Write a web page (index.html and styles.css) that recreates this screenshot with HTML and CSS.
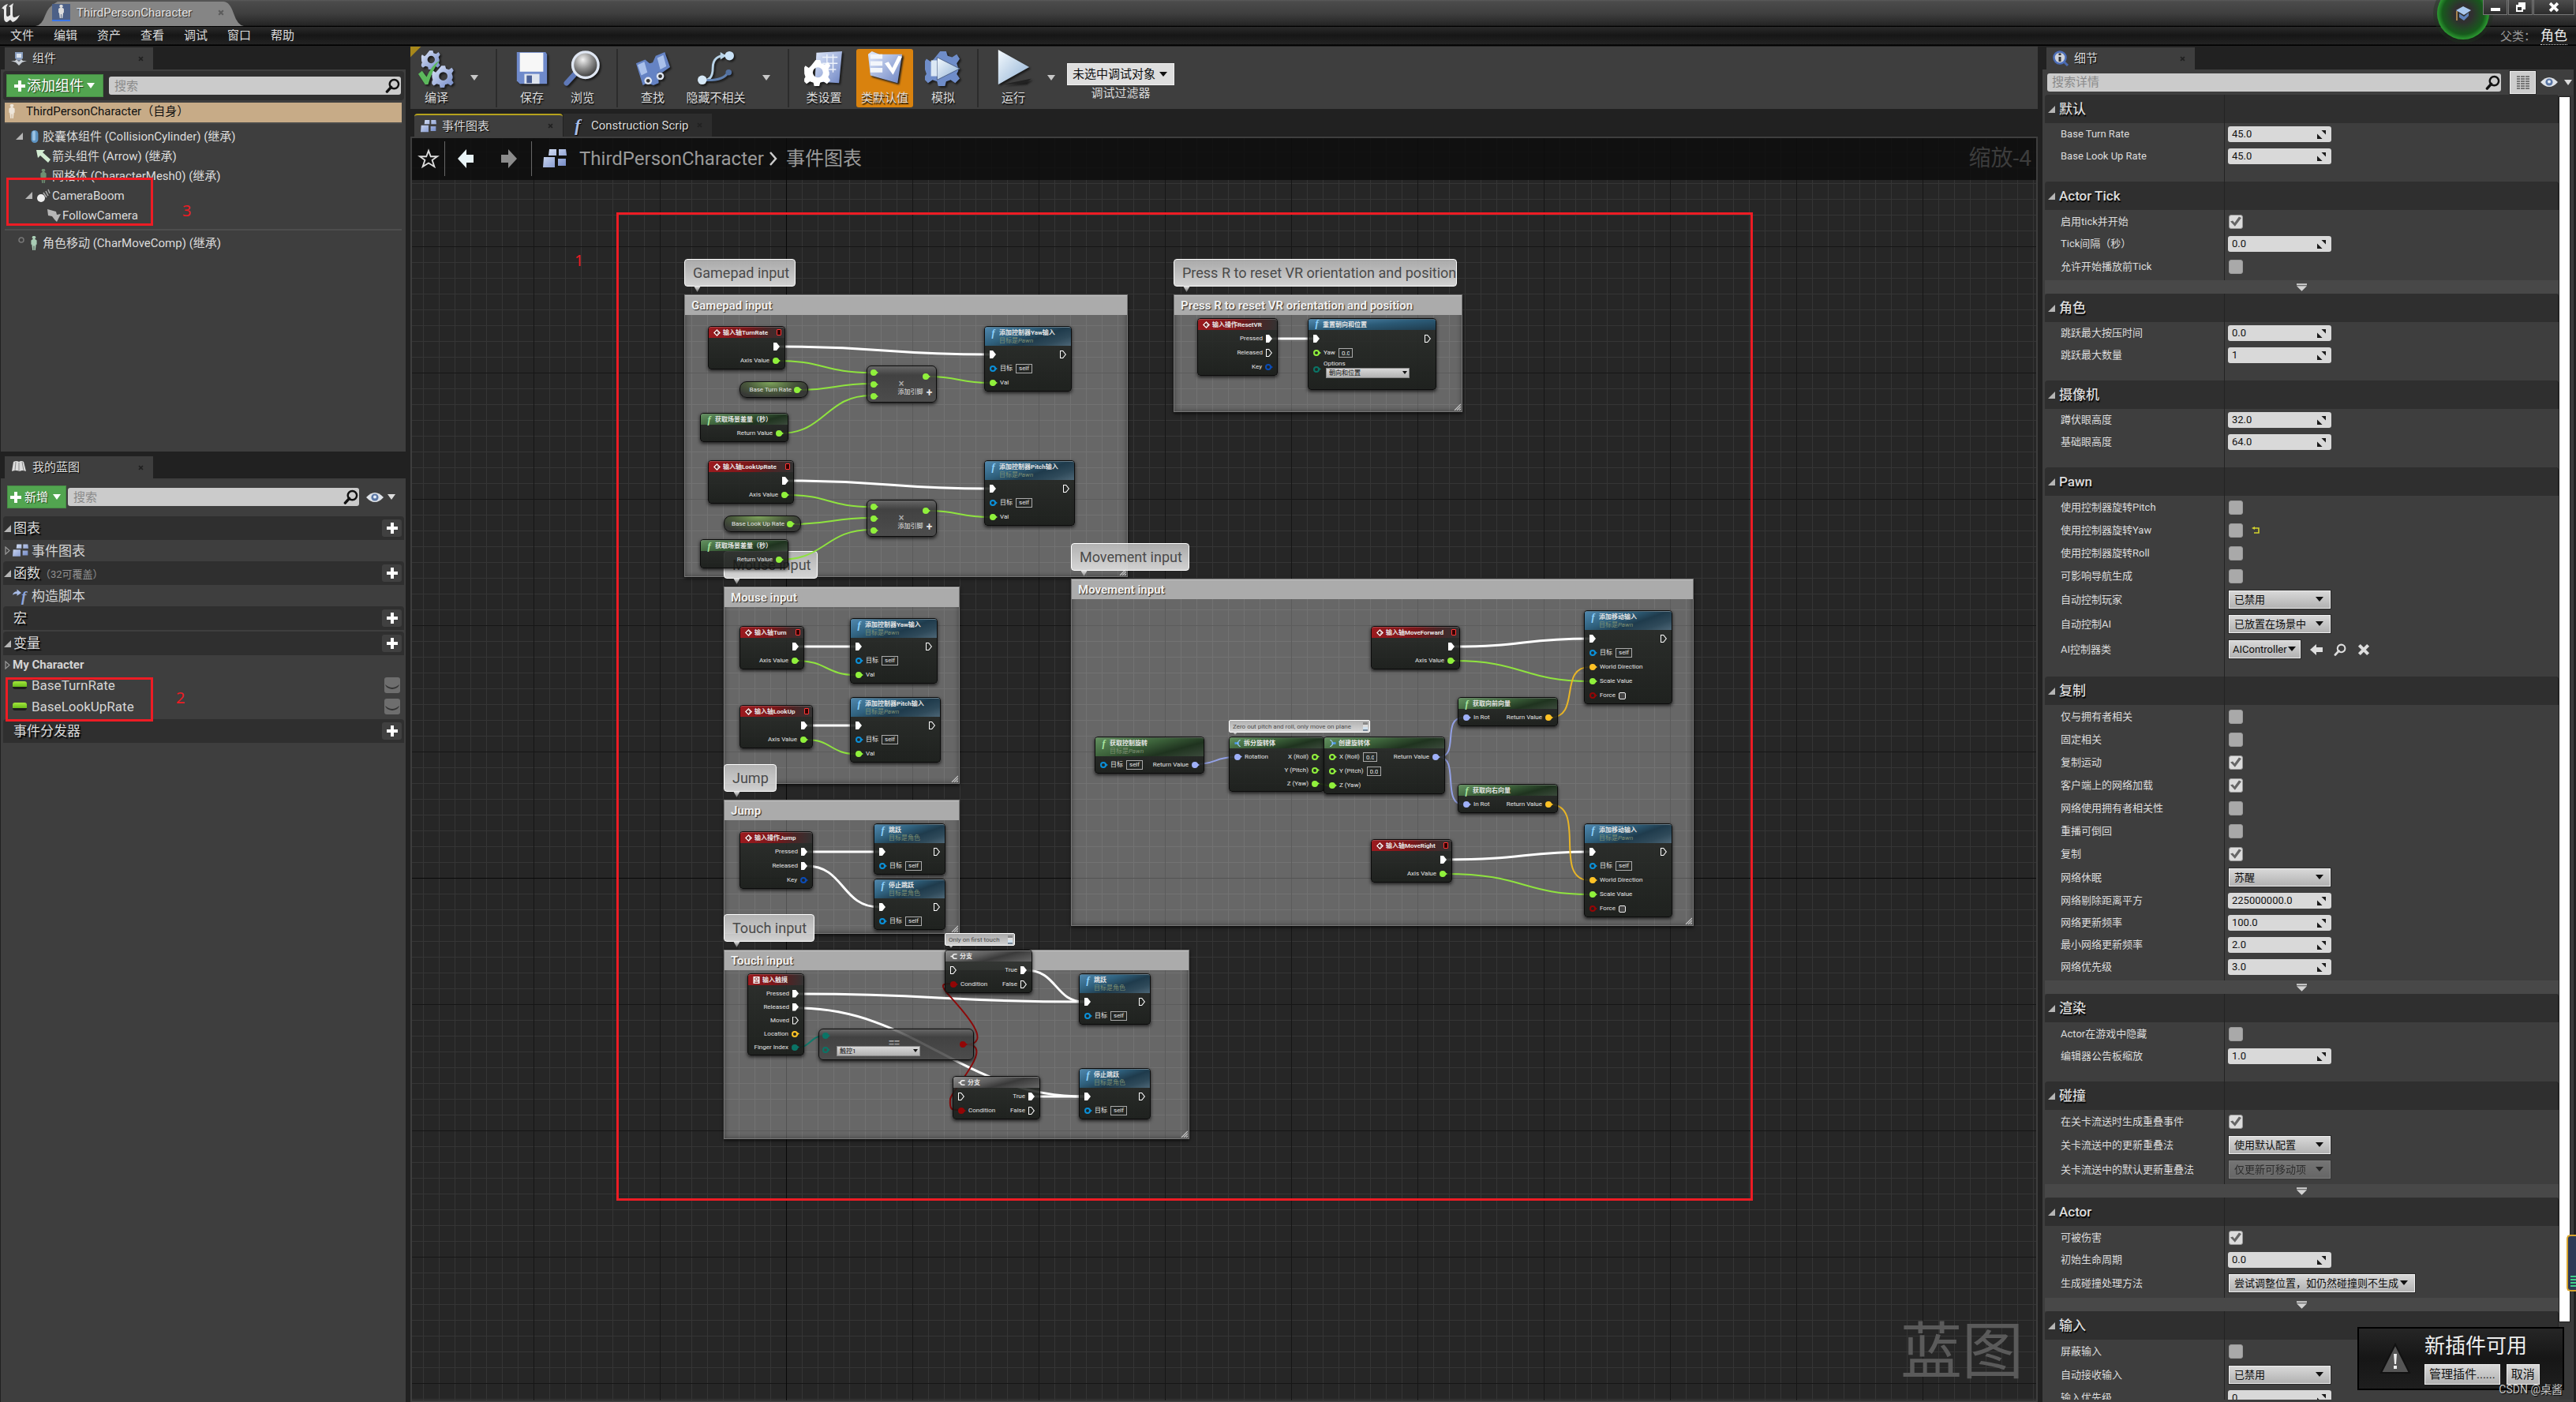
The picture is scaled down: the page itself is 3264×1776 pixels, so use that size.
FILE: index.html
```html
<!DOCTYPE html>
<html lang="zh-CN">
<head>
<meta charset="utf-8">
<title>ThirdPersonCharacter</title>
<link rel="stylesheet" href="styles.css">
</head>
<body>
<svg class="defs" aria-hidden="true">
  <defs>
    <linearGradient id="steel" x1="0" y1="0" x2="1" y2="1"><stop offset="0" stop-color="#dfe8fa"/><stop offset="1" stop-color="#6f86c4"/></linearGradient>
    <linearGradient id="sky" x1="0" y1="0" x2="1" y2="1"><stop offset="0" stop-color="#f4fafe"/><stop offset="1" stop-color="#8fb0d4"/></linearGradient>
    <radialGradient id="lens" cx=".4" cy=".3" r=".8"><stop offset="0" stop-color="#f2f2f2"/><stop offset=".45" stop-color="#8d8d8d"/><stop offset="1" stop-color="#222"/></radialGradient>
    <symbol id="search" viewBox="0 0 20 20"><circle cx="12" cy="8" r="6" fill="none" stroke="currentColor" stroke-width="2.6"/><path d="M8 12 2.500 18" stroke="currentColor" stroke-width="3.600" stroke-linecap="round"/></symbol>
    <symbol id="plus" viewBox="0 0 14 14"><path d="M5 0h4v5h5v4H9v5H5V9H0V5h5z" fill="currentColor"/></symbol>
    <symbol id="cross" viewBox="0 0 10 10"><path d="M1.500 1.500 8.500 8.500M8.500 1.500 1.500 8.500" stroke="currentColor" stroke-width="2.600"/></symbol>
    <symbol id="down" viewBox="0 0 10 7"><path d="M0 0h10L5 7z" fill="currentColor"/></symbol>
    <symbol id="open" viewBox="0 0 9 9"><path d="M9 0v9H0z" fill="#b5b5b5"/></symbol>
    <symbol id="closed" viewBox="0 0 7 11"><path d="M1 1v9l5-4.500z" fill="none" stroke="#999" stroke-width="1.200"/></symbol>
    <symbol id="eye" viewBox="0 0 22 14"><path d="M0 7Q11-5 22 7 11 19 0 7z" fill="#dfe3e8"/><circle cx="11" cy="7" r="4.600" fill="#5c78a6"/><circle cx="11" cy="6.500" r="2" fill="#e4ecf7"/></symbol>
    <symbol id="graph" viewBox="0 0 30 24"><path d="M8 0h9v8H7zM20 0h9l1 8H20zM19 12h10v9H19zM1 10h14v13H0z" fill="url(#steel)"/></symbol>
    <symbol id="spin" viewBox="0 0 10 10"><path d="M5 0h5v5zM0 4v6h6z" fill="#1a1a1a"/></symbol>
    <symbol id="more" viewBox="0 0 14 10"><path d="M0 0h14v2H0zM0 3h14l-7 7z" fill="#d2d2d2"/></symbol>
    <symbol id="gear" viewBox="-12 -12 24 24"><path fill-rule="evenodd" d="M-2-11h4l1 3 3 1 3-2 2 3-2 3 1 3v2l-1 2 2 3-3 3-3-2-3 1-1 4h-4l-1-4-3-1-3 2-3-3 2-3-1-3v-2l-1-2 2-3 3 2 2-2zM0-4.500A4.500 4.500 0 1 0 0 4.500 4.500 4.500 0 1 0 0-4.500z"/></symbol>
    <symbol id="man" viewBox="0 0 10 20"><path d="M5 0a2 2 0 0 1 1 4l3 2v6H8l-1 8H5.500v-6h-1v6H3l-1-8H1V6l3-2a2 2 0 0 1 1-4z" fill="currentColor"/></symbol>
    <symbol id="grip" viewBox="0 0 9 9"><path d="M1 9 9 1M4 9 9 4M7 9 9 7" stroke="#c8c8c8" stroke-width="1.200"/></symbol>
    <symbol id="event" viewBox="0 0 10 10"><path d="M5 1 9 5 5 9 1 5z" fill="#5a0f10" stroke="#fff" stroke-width="1.400"/><path d="M5 3 7 5 5 7" fill="none" stroke="#fff"/></symbol>
    <symbol id="branch" viewBox="0 0 9 10"><path d="M9 2H6Q3 2 3 5T6 8H9M0 5h3" fill="none" stroke="#eee" stroke-width="1.800"/></symbol>
    <symbol id="split" viewBox="0 0 9 10"><path d="M0 5h6" stroke="#4c9bea" stroke-width="3"/><path d="M8 0Q4 3 4 5T8 10" fill="none" stroke="#9cc8ef" stroke-width="1.300"/></symbol>
    <symbol id="merge" viewBox="0 0 9 10"><path d="M3 5h6" stroke="#4c9bea" stroke-width="3"/><path d="M1 0Q5 3 5 5T1 10" fill="none" stroke="#9cc8ef" stroke-width="1.300"/></symbol>
    <symbol id="touch" viewBox="0 0 9 10"><path d="M0 0h9v10H0z" fill="#f2f2f2"/><circle cx="4.500" cy="3.500" r="2" fill="none" stroke="#822"/><path d="M2 8h5" stroke="#822" stroke-width="1.400"/></symbol>
  </defs>
</svg>
<div class="app">
  <header class="titlebar">
    <svg class="logo" viewBox="0 0 28 24"><path d="M1 7Q4 2 9 1L7 5V15q0 2 2 2l3-2V5l-2-1 6-4-1 4V14q0 4 2 4 2 0 7-3-4 8-9 9l-3-3-4 3Q4 24 4 18V8Q2 6 1 7z" fill="#e8e8e8"/></svg>
    <div class="window-tab">
      <svg class="window-tab-shape" viewBox="0 0 264 31" preserveAspectRatio="none"><path d="M0 31Q8 30 12 18T28 0H238Q246 0 251 15T264 31z" fill="#858585"/></svg>
      <span class="thumb"><svg><use href="#man"/></svg></span>
      <span>ThirdPersonCharacter</span>
      <svg class="x"><use href="#cross"/></svg>
    </div>
    <div class="tutorial"><svg viewBox="0 0 20 20"><path d="M10 1 20 6 11 12 1 6z" fill="#a9c8ee"/><path d="M5 10v5l6 4 6-6V9l-6 5z" fill="#5f83bb"/><path d="M2 7v12" stroke="#a5814e" stroke-width="2"/></svg></div>
    <div class="window-buttons">
      <button aria-label="最小化"><svg viewBox="0 0 14 14"><path d="M1 8h12v4H1z" fill="#fff"/></svg></button>
      <button aria-label="还原"><svg viewBox="0 0 14 14"><path d="M4 1h9v9h-3v3H1V4h3zM3 7v4h5V7z" fill="#fff" fill-rule="evenodd"/></svg></button>
      <button class="close" aria-label="关闭"><svg viewBox="0 0 10 10"><use href="#cross"/></svg></button>
    </div>
  </header>
  <nav class="menubar">
    <a href="#">文件</a><a href="#">编辑</a><a href="#">资产</a><a href="#">查看</a><a href="#">调试</a><a href="#">窗口</a><a href="#">帮助</a>
    <span class="parent">父类：<a href="#">角色</a></span>
  </nav>

  <main class="workspace">
    <aside class="left">
      <section class="dock components">
        <div class="tabs"><div class="tab"><svg viewBox="0 0 20 20"><path d="M5 2h10v8l-5 3-5-3z" fill="#8a9fc0"/><path d="M7 4h6v5H7z" fill="#dbe3ee"/><path d="M0 13h5l2-2 3 3 3-3 2 2h5l-6 2-4 4-4-4z" fill="#c9cfd6"/></svg><span>组件</span><svg class="x"><use href="#cross"/></svg></div></div>
        <div class="panel">
          <div class="bar">
            <button class="green big"><svg><use href="#plus"/></svg>添加组件<svg class="dn"><use href="#down"/></svg></button>
            <label class="search"><input type="search" placeholder="搜索" aria-label="搜索组件"><svg><use href="#search"/></svg></label>
          </div>
          <ul class="tree">
            <li class="selected"><svg class="ico"><use href="#man"/></svg>ThirdPersonCharacter（自身）</li>
            <li class="l1"><svg class="tri"><use href="#open"/></svg><svg class="ico" viewBox="0 0 16 20"><rect x="4" y="1" width="10" height="18" rx="5" fill="#5d93c2"/><rect x="6" y="2" width="4" height="14" rx="2" fill="#9cc4e4"/></svg>胶囊体组件 (CollisionCylinder) (继承)</li>
            <li class="l2"><i class="tri"></i><svg class="ico" viewBox="0 0 18 18"><path d="M0 1h11L8 4l10 9-3 4-10-9-3 3z" fill="#d3ecd3"/></svg>箭头组件 (Arrow) (继承)</li>
            <li class="l2"><i class="tri"></i><svg class="ico mesh"><use href="#man"/></svg>网格体 (CharacterMesh0) (继承)</li>
            <li class="l2"><svg class="tri"><use href="#open"/></svg><svg class="ico" viewBox="0 0 18 18"><circle cx="6" cy="12" r="5" fill="#eee"/><path d="m9 5 4 6M12 3l3 6M15 1l2 5" stroke="#aaa" stroke-width="1.600"/></svg>CameraBoom</li>
            <li class="l3"><i class="tri"></i><svg class="ico" viewBox="0 0 18 18"><path d="m1 1 11 3 1 4 5-1-2 4-3 6-3-3-3-4-5-1z" fill="#b7b7b7"/></svg>FollowCamera</li>
            <li class="l1 last"><svg class="tri" viewBox="0 0 9 9"><circle cx="7" cy="1" r="3" fill="none" stroke="#777" stroke-width="1.500"/></svg><svg class="ico move"><use href="#man"/></svg>角色移动 (CharMoveComp) (继承)</li>
          </ul>
        </div>
      </section>
      <section class="dock blueprint">
        <div class="tabs"><div class="tab"><svg viewBox="0 0 20 20"><path d="M3 3q4-2 7 0 3-2 6 0l3 12q-5-2-8 0-5-2-10 0z" fill="#dcdcdc"/><path d="M10 4v11M6 3 5 14M14 3l2 11" stroke="#8a8a8a"/></svg><span>我的蓝图</span><svg class="x"><use href="#cross"/></svg></div></div>
        <div class="panel">
          <div class="bar plain">
            <button class="green"><svg><use href="#plus"/></svg>新增<svg class="dn"><use href="#down"/></svg></button>
            <label class="search"><input type="search" placeholder="搜索" aria-label="搜索蓝图"><svg><use href="#search"/></svg></label>
            <button class="view" aria-label="视图选项"><svg class="eye"><use href="#eye"/></svg><svg class="dn"><use href="#down"/></svg></button>
          </div>
          <h3 class="group"><svg class="tri"><use href="#open"/></svg>图表<button aria-label="添加图表"><svg><use href="#plus"/></svg></button></h3>
          <div class="item"><svg class="tri"><use href="#closed"/></svg><svg class="ico"><use href="#graph"/></svg>事件图表</div>
          <h3 class="group"><svg class="tri"><use href="#open"/></svg>函数<small>（32可覆盖）</small><button aria-label="添加函数"><svg><use href="#plus"/></svg></button></h3>
          <div class="item"><i class="tri"></i><span class="ico fn"><svg viewBox="0 0 12 10"><path d="M0 8Q1 3 6 3V0l6 5-6 4V6Q2 6 0 8z" fill="#a7bbe6"/></svg><i>f</i></span>构造脚本</div>
          <h3 class="group gap"><i class="tri"></i>宏<button aria-label="添加宏"><svg><use href="#plus"/></svg></button></h3>
          <h3 class="group"><svg class="tri"><use href="#open"/></svg>变量<button aria-label="添加变量"><svg><use href="#plus"/></svg></button></h3>
          <div class="item cat"><svg class="tri"><use href="#closed"/></svg>My Character</div>
          <div class="item"><i class="tri"></i><i class="ico var"></i>BaseTurnRate<button class="lid" aria-label="公开"><svg viewBox="0 0 20 20"><path d="M1 9q9 8 18 0-1 5-9 6Q2 14 1 9z" fill="#333"/></svg></button></div>
          <div class="item"><i class="tri"></i><i class="ico var"></i>BaseLookUpRate<button class="lid" aria-label="公开"><svg viewBox="0 0 20 20"><path d="M1 9q9 8 18 0-1 5-9 6Q2 14 1 9z" fill="#333"/></svg></button></div>
          <h3 class="group after"><i class="tri"></i>事件分发器<button aria-label="添加事件分发器"><svg><use href="#plus"/></svg></button></h3>
        </div>
      </section>
    </aside>

    <section class="center">
      <div class="toolbar">
        <div class="tools">
          <button><svg viewBox="0 0 48 48"><g fill="url(#steel)"><use href="#gear" x="4" y="0" width="26" height="26"/><use href="#gear" x="18" y="20" width="30" height="30"/></g><path d="m0 32 5-4 6 8Q18 20 28 14 18 28 13 46H9z" fill="#5cb85c"/></svg>编译</button>
          <button class="drop" aria-label="编译选项"><svg><use href="#down"/></svg></button>
        </div>
        <div class="tools">
          <button><svg viewBox="0 0 48 48"><path d="M4 3h38l2 3v39H8l-4-4z" fill="#6f8acb"/><path d="M8 4h31v25H8z" fill="#f7f7f7"/><path d="M14 32h20v13H14z" fill="#dfe5ee"/><path d="M17 34h7v10h-7z" fill="#4a5f94"/></svg>保存</button>
          <button><svg viewBox="0 0 48 48"><path d="M14 32 3 44" stroke="#5f79b8" stroke-width="7" stroke-linecap="round"/><circle cx="28" cy="20" r="17" fill="url(#lens)" stroke="#dfe6f2" stroke-width="3.500"/></svg>浏览</button>
        </div>
        <div class="tools">
          <button><svg viewBox="0 0 48 48"><path d="m2 18 12-5 6 5 4-1 4-9 12-5 7 20-10 7-6 0 1 14-7 3-8-3-6 3-5-16z" fill="#6583c4"/><path d="m4 20 9-4 4 14-8 4zM30 11l8-4 4 15-8 4z" fill="#a9c0ea"/><circle cx="18" cy="41" r="5" fill="#dfe6f2"/><circle cx="34" cy="35" r="5" fill="#dfe6f2"/><circle cx="18" cy="41" r="2.500" fill="#333"/><circle cx="34" cy="35" r="2.500" fill="#333"/></svg>查找</button>
          <button class="wide"><svg viewBox="0 0 48 48"><path d="M6 40Q20 42 20 24T40 8" fill="none" stroke="#b8d3e8" stroke-width="3"/><path d="M6 40Q34 42 40 30" fill="none" stroke="#5f7fae" stroke-width="3"/><path d="m30 3 8 5-8 5z" fill="#b8d3e8"/><circle cx="42" cy="8" r="6" fill="#c9e2f7"/><circle cx="41" cy="30" r="4" fill="#52709f"/><circle cx="6" cy="40" r="6" fill="#d6e8f6"/></svg>隐藏不相关</button>
          <button class="drop" aria-label="隐藏选项"><svg><use href="#down"/></svg></button>
        </div>
        <div class="tools">
          <button><svg viewBox="0 0 48 48"><path d="M14 4 48 2 44 44 12 42z" fill="url(#steel)"/><path d="M22 10h20M22 18h20M22 26h18M28 6v24M36 6v24" stroke="#eef3fb" stroke-width="1.500"/><g fill="#fff"><use href="#gear" x="-2" y="12" width="36" height="36"/></g></svg>类设置</button>
          <button class="on"><svg viewBox="0 0 48 48"><path d="m2 6 5-4 10 4 30 0-6 38L5 34z" fill="url(#steel)"/><path d="M5 9h16M5 18h16M5 27h16" stroke="#f3f6fb" stroke-width="6"/><path d="m24 18 5-2 5 8L42 8l5 1-12 24z" fill="#fff"/></svg>类默认值</button>
          <button><svg viewBox="0 0 48 48"><g fill="#6f8dc9"><use href="#gear" x="0" y="0" width="48" height="48"/></g><path d="M16 10 46 25 16 40z" fill="url(#sky)" stroke="#4a5f86"/><path d="M8 14h8v21H8z" fill="#dbe8f4"/></svg>模拟</button>
        </div>
        <div class="tools">
          <button><svg viewBox="0 0 48 48"><path d="M10 46 48 38 40 44z" fill="#222"/><path d="M4 0 45 23 4 46z" fill="url(#sky)"/></svg>运行</button>
          <button class="drop" aria-label="运行选项"><svg><use href="#down"/></svg></button>
          <label class="debug"><span class="combo"><select><option>未选中调试对象</option></select></span>调试过滤器</label>
        </div>
      </div>
      <div class="tabs graph-tabs">
        <div class="tab active"><svg><use href="#graph"/></svg><span>事件图表</span><svg class="x"><use href="#cross"/></svg></div>
        <div class="tab"><i class="f">f</i><span>Construction Scrip</span><svg class="x"><use href="#cross"/></svg></div>
      </div>
      <div class="graph">
        <div class="crumbs">
          <button aria-label="收藏"><svg class="star" viewBox="0 0 26 26"><path d="m13 2 3 8 9 0-7 5 3 9-8-5-8 5 3-9-7-5 9 0z" fill="none" stroke="#ddd" stroke-width="2"/></svg></button>
          <button aria-label="后退"><svg viewBox="0 0 24 28"><path d="M13 2v7h9v10h-9v7L2 14z" fill="#e8f3f6"/></svg></button>
          <button aria-label="前进"><svg viewBox="0 0 24 28"><path d="M11 2v7H2v10h9v7l11-12z" fill="#8b8b8b"/></svg></button>
          <svg class="gi"><use href="#graph"/></svg>
          <a href="#">ThirdPersonCharacter</a><svg class="chev" viewBox="0 0 12 20"><path d="m2 2 7 8-7 8" fill="none" stroke="#ccc" stroke-width="2.500"/></svg><span>事件图表</span>
          <span class="zoom">缩放-4</span>
        </div>
        <div class="watermark">蓝图</div>
        <div class="world">
          <section class="comment" id="c-pad"><h4>Gamepad input</h4><svg><use href="#grip"/></svg></section>
          <section class="comment" id="c-vr"><h4>Press R to reset VR orientation and position</h4><svg><use href="#grip"/></svg></section>
          <section class="comment" id="c-mouse"><h4>Mouse input</h4><svg><use href="#grip"/></svg></section>
          <section class="comment" id="c-jump"><h4>Jump</h4><svg><use href="#grip"/></svg></section>
          <section class="comment" id="c-touch"><h4>Touch input</h4><svg><use href="#grip"/></svg></section>
          <section class="comment" id="c-move"><h4>Movement input</h4><svg><use href="#grip"/></svg></section>
          <p class="bubble" id="b-pad">Gamepad input</p>
          <p class="bubble" id="b-vr">Press R to reset VR orientation and position</p>
          <p class="bubble" id="b-mouse">Mouse input</p>
          <p class="bubble" id="b-jump">Jump</p>
          <p class="bubble" id="b-touch">Touch input</p>
          <p class="bubble" id="b-move">Movement input</p>
          <p class="bubble note" id="b-first">Only on first touch</p>
          <p class="bubble note" id="b-zero">Zero out pitch and roll, only move on plane</p>

          <svg class="wires" width="2200" height="1500">
            <g class="w-exec">
              <path d="M986 439C1120 439 1120 449 1254 449"/><path d="M998 609C1126 609 1126 619 1254 619"/>
              <path d="M1610 429H1664"/><path d="M1010 819H1084"/><path d="M1022 919H1084"/>
              <path d="M1022 1079H1114"/><path d="M1022 1097C1070 1097 1066 1149 1114 1149"/>
              <path d="M1010 1259C1190 1259 1190 1269 1374 1269"/><path d="M1010 1277C1160 1277 1220 1389 1374 1389"/>
              <path d="M1300 1229C1340 1229 1336 1269 1374 1269"/><path d="M1310 1389H1374"/>
              <path d="M1842 819C1930 819 1930 809 2014 809"/><path d="M1832 1089C1930 1089 1930 1079 2014 1079"/>
            </g>
            <g class="w-float">
              <path d="M984 457C1044 457 1044 472 1104 472"/><path d="M1012 494C1058 494 1058 486 1104 486"/>
              <path d="M988 549C1046 549 1046 501 1104 501"/><path d="M1177 477C1215 477 1215 485 1254 485"/>
              <path d="M996 627C1050 627 1050 642 1104 642"/><path d="M1004 664C1054 664 1054 656 1104 656"/>
              <path d="M988 709C1046 709 1046 671 1104 671"/><path d="M1177 647C1215 647 1215 655 1254 655"/>
              <path d="M1010 837C1047 837 1047 855 1084 855"/><path d="M1022 937C1053 937 1053 955 1084 955"/>
              <path d="M1669 992 1686 996"/>
              <path d="M1842 837C1930 837 1930 863 2014 863"/><path d="M1832 1107C1930 1107 1930 1133 2014 1133"/>
            </g>
            <g class="w-rot"><path d="M1517 968C1540 968 1540 959 1564 959"/><path d="M1823 959C1850 959 1826 909 1854 909"/><path d="M1823 959C1850 959 1826 1019 1854 1019"/></g>
            <g class="w-vec"><path d="M1964 909C2004 909 1974 845 2014 845"/><path d="M1964 1019C2012 1019 1966 1115 2014 1115"/></g>
            <path class="w-enum" d="M1010 1327C1027 1327 1027 1312 1044 1312"/>
            <g class="w-bool"><path d="M1224 1323C1262 1323 1215 1275 1200 1258 1190 1246 1196 1246 1206 1246"/><path d="M1224 1323C1262 1323 1208 1378 1204 1392 1203 1406 1206 1406 1214 1406"/></g>
          </svg>

          <article class="node red" id="n-turnrate"><h5><svg><use href="#event"/></svg>输入轴TurnRate<b></b></h5><div><span></span><span><i class="ex"></i></span></div><div><span></span><span>Axis Value<i class="pin float on"></i></span></div></article>
          <article class="node pill" id="n-baseturn"><span>Base Turn Rate<i class="pin float on"></i></span></article>
          <article class="node grn" id="n-delta1"><h5><i class="f">f</i>获取场景差量（秒）</h5><div><span></span><span>Return Value<i class="pin float on"></i></span></div></article>
          <article class="node math" id="n-mul1"><div class="pins"><i class="pin float on"></i><i class="pin float on"></i><i class="pin float on"></i></div><p><em>×</em>添加引脚 <b>✚</b></p><i class="pin float on"></i></article>
          <article class="node blu" id="n-yaw1"><h5><i class="f">f</i><span>添加控制器Yaw输入<small>目标是<em>Pawn</em></small></span></h5><div><span><i class="ex"></i></span><span><i class="ex off"></i></span></div><div><span><i class="pin obj"></i>目标<u>self</u></span></div><div><span><i class="pin float on"></i>Val</span></div></article>
          <article class="node red" id="n-lookrate"><h5><svg><use href="#event"/></svg>输入轴LookUpRate<b></b></h5><div><span></span><span><i class="ex"></i></span></div><div><span></span><span>Axis Value<i class="pin float on"></i></span></div></article>
          <article class="node pill" id="n-baselook"><span>Base Look Up Rate<i class="pin float on"></i></span></article>
          <article class="node grn" id="n-delta2"><h5><i class="f">f</i>获取场景差量（秒）</h5><div><span></span><span>Return Value<i class="pin float on"></i></span></div></article>
          <article class="node math" id="n-mul2"><div class="pins"><i class="pin float on"></i><i class="pin float on"></i><i class="pin float on"></i></div><p><em>×</em>添加引脚 <b>✚</b></p><i class="pin float on"></i></article>
          <article class="node blu" id="n-pitch1"><h5><i class="f">f</i><span>添加控制器Pitch输入<small>目标是<em>Pawn</em></small></span></h5><div><span><i class="ex"></i></span><span><i class="ex off"></i></span></div><div><span><i class="pin obj"></i>目标<u>self</u></span></div><div><span><i class="pin float on"></i>Val</span></div></article>

          <article class="node red" id="n-resetvr"><h5><svg><use href="#event"/></svg>输入操作ResetVR</h5><div><span></span><span>Pressed<i class="ex"></i></span></div><div><span></span><span>Released<i class="ex off"></i></span></div><div><span></span><span>Key<i class="pin key"></i></span></div></article>
          <article class="node blu flat" id="n-orient"><h5><i class="f">f</i>重置朝向和位置</h5><div><span><i class="ex"></i></span><span><i class="ex off"></i></span></div><div><label><i class="pin float"></i>Yaw<input value="0.0"></label></div><div class="tall"><span><i class="pin enum"></i><label class="stack">Options<span class="combo"><select><option>朝向和位置</option></select></span></label></span></div></article>

          <article class="node red" id="n-turn"><h5><svg><use href="#event"/></svg>输入轴Turn<b></b></h5><div><span></span><span><i class="ex"></i></span></div><div><span></span><span>Axis Value<i class="pin float on"></i></span></div></article>
          <article class="node blu" id="n-yaw2"><h5><i class="f">f</i><span>添加控制器Yaw输入<small>目标是<em>Pawn</em></small></span></h5><div><span><i class="ex"></i></span><span><i class="ex off"></i></span></div><div><span><i class="pin obj"></i>目标<u>self</u></span></div><div><span><i class="pin float on"></i>Val</span></div></article>
          <article class="node red" id="n-look"><h5><svg><use href="#event"/></svg>输入轴LookUp<b></b></h5><div><span></span><span><i class="ex"></i></span></div><div><span></span><span>Axis Value<i class="pin float on"></i></span></div></article>
          <article class="node blu" id="n-pitch2"><h5><i class="f">f</i><span>添加控制器Pitch输入<small>目标是<em>Pawn</em></small></span></h5><div><span><i class="ex"></i></span><span><i class="ex off"></i></span></div><div><span><i class="pin obj"></i>目标<u>self</u></span></div><div><span><i class="pin float on"></i>Val</span></div></article>

          <article class="node red" id="n-jump"><h5><svg><use href="#event"/></svg>输入操作Jump</h5><div><span></span><span>Pressed<i class="ex"></i></span></div><div><span></span><span>Released<i class="ex"></i></span></div><div><span></span><span>Key<i class="pin key"></i></span></div></article>
          <article class="node blu" id="n-dojump"><h5><i class="f">f</i><span>跳跃<small>目标是角色</small></span></h5><div><span><i class="ex"></i></span><span><i class="ex off"></i></span></div><div><span><i class="pin obj"></i>目标<u>self</u></span></div></article>
          <article class="node blu" id="n-stopjump"><h5><i class="f">f</i><span>停止跳跃<small>目标是角色</small></span></h5><div><span><i class="ex"></i></span><span><i class="ex off"></i></span></div><div><span><i class="pin obj"></i>目标<u>self</u></span></div></article>

          <article class="node red tight" id="n-touch"><h5><svg><use href="#touch"/></svg>输入触摸</h5><div><span></span><span>Pressed<i class="ex"></i></span></div><div><span></span><span>Released<i class="ex"></i></span></div><div><span></span><span>Moved<i class="ex off"></i></span></div><div><span></span><span>Location<i class="pin vec"></i></span></div><div><span></span><span>Finger Index<i class="pin enum on"></i></span></div></article>
          <article class="node math" id="n-equal"><div class="pins"><i class="pin enum on"></i><i class="pin enum"></i></div><p><em>==</em><label class="combo"><select aria-label="手指索引"><option>触控1</option></select></label></p><i class="pin bool on"></i></article>
          <article class="node gry" id="n-branch1"><h5><svg><use href="#branch"/></svg>分支</h5><div><span><i class="ex off"></i></span><span>True<i class="ex"></i></span></div><div><span><i class="pin bool on"></i>Condition</span><span>False<i class="ex off"></i></span></div></article>
          <article class="node gry" id="n-branch2"><h5><svg><use href="#branch"/></svg>分支</h5><div><span><i class="ex off"></i></span><span>True<i class="ex"></i></span></div><div><span><i class="pin bool on"></i>Condition</span><span>False<i class="ex off"></i></span></div></article>
          <article class="node blu" id="n-tjump"><h5><i class="f">f</i><span>跳跃<small>目标是角色</small></span></h5><div><span><i class="ex"></i></span><span><i class="ex off"></i></span></div><div><span><i class="pin obj"></i>目标<u>self</u></span></div></article>
          <article class="node blu" id="n-tstop"><h5><i class="f">f</i><span>停止跳跃<small>目标是角色</small></span></h5><div><span><i class="ex"></i></span><span><i class="ex off"></i></span></div><div><span><i class="pin obj"></i>目标<u>self</u></span></div></article>

          <article class="node grn two" id="n-ctrl"><h5><i class="f">f</i><span>获取控制旋转<small>目标是<em>Pawn</em></small></span></h5><div><span><i class="pin obj"></i>目标<u>self</u></span><span>Return Value<i class="pin rot on"></i></span></div></article>
          <article class="node grn tight" id="n-break"><h5><svg><use href="#split"/></svg>拆分旋转体</h5><div><span><i class="pin rot on"></i>Rotation</span><span>X (Roll)<i class="pin float"></i></span></div><div><span></span><span>Y (Pitch)<i class="pin float"></i></span></div><div><span></span><span>Z (Yaw)<i class="pin float on"></i></span></div></article>
          <article class="node grn" id="n-make"><h5><svg><use href="#merge"/></svg>创建旋转体</h5><div><label><i class="pin float"></i>X (Roll)<input value="0.0"></label><span>Return Value<i class="pin rot on"></i></span></div><div><label><i class="pin float"></i>Y (Pitch)<input value="0.0"></label></div><div><span><i class="pin float on"></i>Z (Yaw)</span></div></article>
          <article class="node grn" id="n-fwd"><h5><i class="f">f</i>获取向前向量</h5><div><span><i class="pin rot on"></i>In Rot</span><span>Return Value<i class="pin vec on"></i></span></div></article>
          <article class="node grn" id="n-right"><h5><i class="f">f</i>获取向右向量</h5><div><span><i class="pin rot on"></i>In Rot</span><span>Return Value<i class="pin vec on"></i></span></div></article>
          <article class="node red" id="n-mfwd"><h5><svg><use href="#event"/></svg>输入轴MoveForward<b></b></h5><div><span></span><span><i class="ex"></i></span></div><div><span></span><span>Axis Value<i class="pin float on"></i></span></div></article>
          <article class="node red" id="n-mright"><h5><svg><use href="#event"/></svg>输入轴MoveRight<b></b></h5><div><span></span><span><i class="ex"></i></span></div><div><span></span><span>Axis Value<i class="pin float on"></i></span></div></article>
          <article class="node blu" id="n-add1"><h5><i class="f">f</i><span>添加移动输入<small>目标是<em>Pawn</em></small></span></h5><div><span><i class="ex"></i></span><span><i class="ex off"></i></span></div><div><span><i class="pin obj"></i>目标<u>self</u></span></div><div><span><i class="pin vec on"></i>World Direction</span></div><div><span><i class="pin float on"></i>Scale Value</span></div><div><label><i class="pin bool"></i>Force<input type="checkbox"></label></div></article>
          <article class="node blu" id="n-add2"><h5><i class="f">f</i><span>添加移动输入<small>目标是<em>Pawn</em></small></span></h5><div><span><i class="ex"></i></span><span><i class="ex off"></i></span></div><div><span><i class="pin obj"></i>目标<u>self</u></span></div><div><span><i class="pin vec on"></i>World Direction</span></div><div><span><i class="pin float on"></i>Scale Value</span></div><div><label><i class="pin bool"></i>Force<input type="checkbox"></label></div></article>
        </div>
      </div>
    </section>

    <aside class="dock details">
      <div class="tabs"><div class="tab"><svg viewBox="0 0 20 20"><path d="m13 13 6 6" stroke="#4b69ad" stroke-width="3"/><circle cx="9" cy="9" r="7.500" fill="#cfd3da" stroke="#4d6fba" stroke-width="2.500"/><path d="M9 3.500v2.500M9 8v6" stroke="#333" stroke-width="3"/></svg><span>细节</span><svg class="x"><use href="#cross"/></svg></div></div>
      <div class="panel">
        <div class="bar plain">
          <label class="search"><input type="search" placeholder="搜索详情" aria-label="搜索详情"><svg><use href="#search"/></svg></label>
          <button class="matrix" aria-label="属性矩阵"><svg viewBox="0 0 16 18"><path d="M0 2h4M5 2h5M11 2h5M0 5h4M5 5h5M11 5h5M0 8h4M5 8h5M11 8h5M0 11h4M5 11h5M11 11h5M0 14h4M5 14h5M11 14h5M0 17h4M5 17h5M11 17h5" stroke="#777" stroke-width="2"/></svg></button>
          <button class="view" aria-label="视图选项"><svg class="eye"><use href="#eye"/></svg><svg class="dn"><use href="#down"/></svg></button>
        </div>
        <div class="scroller">
          <div class="props">
            <section class="sec"><h3><svg class="tri"><use href="#open"/></svg>默认</h3>
              <label class="num">Base Turn Rate<span><input value="45.0"><svg><use href="#spin"/></svg></span></label>
              <label class="num">Base Look Up Rate<span><input value="45.0"><svg><use href="#spin"/></svg></span></label></section>
            <section class="sec ex-more"><h3><svg class="tri"><use href="#open"/></svg>Actor Tick</h3>
              <label class="chk">启用tick并开始<span><input type="checkbox" checked></span></label>
              <label class="num">Tick间隔（秒）<span><input value="0.0"><svg><use href="#spin"/></svg></span></label>
              <label class="chk">允许开始播放前Tick<span><input type="checkbox"></span></label></section>
            <button class="more" aria-label="显示高级"><svg><use href="#more"/></svg></button>
            <section class="sec"><h3><svg class="tri"><use href="#open"/></svg>角色</h3>
              <label class="num">跳跃最大按压时间<span><input value="0.0"><svg><use href="#spin"/></svg></span></label>
              <label class="num">跳跃最大数量<span><input value="1"><svg><use href="#spin"/></svg></span></label></section>
            <section class="sec"><h3><svg class="tri"><use href="#open"/></svg>摄像机</h3>
              <label class="num">蹲伏眼高度<span><input value="32.0"><svg><use href="#spin"/></svg></span></label>
              <label class="num">基础眼高度<span><input value="64.0"><svg><use href="#spin"/></svg></span></label></section>
            <section class="sec"><h3><svg class="tri"><use href="#open"/></svg>Pawn</h3>
              <label class="chk">使用控制器旋转Pitch<span><input type="checkbox"></span></label>
              <label class="chk">使用控制器旋转Yaw<span><input type="checkbox"><svg class="reset" viewBox="0 0 10 10"><path d="M3 2h6v6H3" fill="none" stroke="#d3d32c" stroke-width="1.600"/><path d="M4 0v4L0 2z" fill="#d3d32c"/></svg></span></label>
              <label class="chk">使用控制器旋转Roll<span><input type="checkbox"></span></label>
              <label class="chk">可影响导航生成<span><input type="checkbox"></span></label>
              <label class="sel">自动控制玩家<span class="combo"><select><option>已禁用</option></select></span></label>
              <label class="sel">自动控制AI<span class="combo"><select><option>已放置在场景中</option></select></span></label>
              <div class="sel ai"><label for="ai-class">AI控制器类</label><span class="combo"><select id="ai-class"><option>AIController</option></select></span><button aria-label="使用选中"><svg viewBox="0 0 16 16"><path d="M8 1v4h8v6H8v4L0 8z" fill="#ddd"/></svg></button><button aria-label="浏览"><svg><use href="#search"/></svg></button><button aria-label="清除"><svg><use href="#cross"/></svg></button></div></section>
            <section class="sec ex-more"><h3><svg class="tri"><use href="#open"/></svg>复制</h3>
              <label class="chk">仅与拥有者相关<span><input type="checkbox"></span></label>
              <label class="chk">固定相关<span><input type="checkbox"></span></label>
              <label class="chk">复制运动<span><input type="checkbox" checked></span></label>
              <label class="chk">客户端上的网络加载<span><input type="checkbox" checked></span></label>
              <label class="chk">网络使用拥有者相关性<span><input type="checkbox"></span></label>
              <label class="chk">重播可倒回<span><input type="checkbox"></span></label>
              <label class="chk">复制<span><input type="checkbox" checked></span></label>
              <label class="sel">网络休眠<span class="combo"><select><option>苏醒</option></select></span></label>
              <label class="num">网络剔除距离平方<span><input value="225000000.0"><svg><use href="#spin"/></svg></span></label>
              <label class="num">网络更新频率<span><input value="100.0"><svg><use href="#spin"/></svg></span></label>
              <label class="num">最小网络更新频率<span><input value="2.0"><svg><use href="#spin"/></svg></span></label>
              <label class="num">网络优先级<span><input value="3.0"><svg><use href="#spin"/></svg></span></label></section>
            <button class="more" aria-label="显示高级"><svg><use href="#more"/></svg></button>
            <section class="sec"><h3><svg class="tri"><use href="#open"/></svg>渲染</h3>
              <label class="chk">Actor在游戏中隐藏<span><input type="checkbox"></span></label>
              <label class="num">编辑器公告板缩放<span><input value="1.0"><svg><use href="#spin"/></svg></span></label></section>
            <section class="sec ex-more"><h3><svg class="tri"><use href="#open"/></svg>碰撞</h3>
              <label class="chk">在关卡流送时生成重叠事件<span><input type="checkbox" checked></span></label>
              <label class="sel">关卡流送中的更新重叠法<span class="combo"><select><option>使用默认配置</option></select></span></label>
              <label class="sel">关卡流送中的默认更新重叠法<span class="combo dim"><select disabled><option>仅更新可移动项</option></select></span></label></section>
            <button class="more" aria-label="显示高级"><svg><use href="#more"/></svg></button>
            <section class="sec ex-more"><h3><svg class="tri"><use href="#open"/></svg>Actor</h3>
              <label class="chk">可被伤害<span><input type="checkbox" checked></span></label>
              <label class="num">初始生命周期<span><input value="0.0"><svg><use href="#spin"/></svg></span></label>
              <label class="sel">生成碰撞处理方法<span class="combo long"><select><option>尝试调整位置，如仍然碰撞则不生成</option></select></span></label></section>
            <button class="more" aria-label="显示高级"><svg><use href="#more"/></svg></button>
            <section class="sec"><h3><svg class="tri"><use href="#open"/></svg>输入</h3>
              <label class="chk">屏蔽输入<span><input type="checkbox"></span></label>
              <label class="sel">自动接收输入<span class="combo"><select><option>已禁用</option></select></span></label>
              <label class="num">输入优先级<span><input value="0"><svg><use href="#spin"/></svg></span></label></section>
          </div>
          <div class="scrollbar"><i></i></div>
        </div>
      </div>
    </aside>
  </main>

  <div class="mark" id="m-graph"></div><span class="mark-no" id="m1">1</span>
  <div class="mark" id="m-vars"></div><span class="mark-no" id="m2">2</span>
  <div class="mark" id="m-cam"></div><span class="mark-no" id="m3">3</span>
  <div class="meter"><i></i></div>
  <div class="toast">
    <svg viewBox="0 0 38 38"><path d="M19 1 37 37H1z" fill="#555" stroke="#111" stroke-width="2"/><path d="M17 13h4l-1 13h-2zM17 28h4v4h-4z" fill="#eee"/></svg>
    <div><strong>新插件可用</strong><p><button>管理插件......</button><button>取消</button></p></div>
  </div>
  <span class="credit">CSDN @桌酱</span>
</div>
</body>
</html>
```
FILE: styles.css
```css
*{box-sizing:border-box}
body{margin:0;background:#212121;color:#dcdcdc;font:15px/20px Roboto,"Noto Sans CJK SC",sans-serif;white-space:nowrap}
h3,h4,h5,p,ul{margin:0;padding:0;font-weight:400}
ul{list-style:none}
i,em{font-style:normal}
a{color:inherit;text-decoration:none}
button,input,select{font:inherit;color:inherit;margin:0;padding:0;border:0;background:none;outline:0}
input{min-width:0}
svg{display:block;flex:none;overflow:visible}
.defs{position:absolute;width:0;height:0}
.f{width:20px;text-align:center;font:italic bold 22px/22px "Liberation Serif",serif;color:#a9bfe8}

.app{position:relative;display:grid;grid-template-rows:34px 24px minmax(0,1fr);height:100vh;overflow:hidden}

/* title bar */
.titlebar{display:flex;align-items:flex-end;background:linear-gradient(#5a5a5a 0,#4b4b4b 6%,#3f3f3f 50%,#242424 95%,#000 97%)}
.logo{width:28px;height:24px;margin:0 16px 6px 1px}
.window-tab{position:relative;display:flex;align-items:center;gap:8px;width:264px;height:31px;margin-bottom:1px;padding:0 25px 4px 21px;color:#e4e4e4;text-shadow:1px 1px 1px #222}
.window-tab>*{position:relative}
.window-tab .window-tab-shape{position:absolute;inset:0;width:100%;height:100%}
.thumb{display:grid;place-items:center;width:23px;height:22px;background:#4c6087;border-bottom:2px solid #3a76e8;color:#ddd}
.thumb svg{width:9px;height:17px}
.x{width:8px;height:8px;margin-left:auto;color:#1b1b1b}
.window-tab .x{color:#5c5c5c}
.tutorial{display:grid;place-items:center;width:66px;height:66px;margin:0 -8px -16px auto;border-radius:50%;background:radial-gradient(circle closest-side,#303030 35%,#175a1c 80%,#2c9c31 100%);box-shadow:0 0 0 5px #1d331e66;z-index:1}
.tutorial svg{width:20px;height:20px}
.window-buttons{display:flex;align-self:flex-start;gap:1px;margin-right:2px;z-index:2}
.window-buttons button{display:grid;place-items:center;width:31px;height:19px;border:1px solid #777;border-top:0;background:linear-gradient(#4c4c4c,#2d2d2d)}
.window-buttons svg{width:14px;height:14px}
.window-buttons .close{width:52px;color:#fff}

/* menu bar */
.menubar{display:flex;align-items:center;gap:25px;padding:0 11px 2px 13px;background:linear-gradient(#2a2a2a,#161616 45%,#222 90%,#000 96%)}
.parent{margin-left:auto;color:#999}
.parent a{margin-left:6px;padding-bottom:1px;border-bottom:1px dotted #ccc;color:#eee;font-size:17px}

/* workspace */
.workspace{display:grid;grid-template-columns:513px minmax(0,1fr) 673px;gap:6px;padding:0 3px 0 1px;min-height:0}
.left,.dock,.center{display:flex;flex-direction:column;min-height:0;min-width:0}
.left{gap:4px}
.components{flex:3 1 0}
.blueprint{flex:7 1 0}
.tabs{display:flex;flex:none;gap:1px;padding:2px 0 0 5px}
.tab{display:flex;align-items:center;gap:7px;width:188px;height:28px;padding:0 12px 0 8px;background:#3e3e3e;text-shadow:1px 1px 1px #000}
.tab svg{width:20px;height:20px}
.tab .x{width:7px;height:7px;margin-left:auto;color:#222}
.panel{flex:1;min-height:0;background:#3e3e3e;overflow:hidden}

.bar{display:flex;align-items:center;gap:7px;height:37px;margin:2px 2px 0 3px;padding:0 4px;background:#2f2f2f;border-radius:4px}
.plain{background:none}
.green{display:flex;align-items:center;gap:4px;height:29px;padding:0 6px 0 3px;border:1px solid #468d44;background:#52a550;color:#fff;text-shadow:1px 1px 1px #1b3d1b}
.green svg{width:14px;height:14px}
.green .dn{margin-left:2px}
.green.big{font-size:18px;gap:2px;padding:0 10px 0 9px}
.bar .dn{width:10px;height:7px}
.search{display:flex;align-items:center;flex:1;height:23px;padding:0 1px 0 7px;border-radius:3px;background:#cbcbcb;color:#111}
.search input{flex:1}
.search input::placeholder{color:#8a8a8a;opacity:1}
.search svg{width:19px;height:19px}
.view{display:flex;align-items:center;gap:5px;color:#ddd}
.eye{width:22px;height:14px}

/* component tree */
.tree{margin:3px 5px 0}
.tree li{display:flex;align-items:center;gap:2px;height:25px}
.tree .tri{width:9px;height:9px;margin:0 3px 0 0}
.ico{width:18px;height:18px}
.tree .selected{padding-bottom:4px;background:#c7ab87;gap:9px;margin-bottom:5px;box-shadow:0 2px #4a4a4a;color:#111}
.tree .selected .ico{color:#eee6da}
.l1{padding-left:14px}
.l2{padding-left:26px}
.l3{padding-left:39px}
.mesh{color:#6e8f72}
.move{color:#a9cdb5}
.tree .last{height:33px;border-top:2px solid #4d4d4d;margin-top:5px}

/* my blueprint */
.blueprint .bar{height:43px;padding-left:5px;gap:2px}
.blueprint .view{margin:0 7px 0 7px}
.group{display:flex;align-items:center;height:30px;margin:0 2px 0 3px;padding:0 3px 0 1px;border-radius:4px 4px 0 0;background:#2f2f2f;font-size:17px;text-shadow:2px 2px 1px #000}
.plain+.group,.after{margin-top:3px}
.gap{margin-bottom:2px}
.group .tri{width:9px;height:9px;margin-right:3px}
.group small{margin:4px 0 0 0;color:#8f8f8f;font-size:13px;text-shadow:none}
.group button{display:grid;place-items:center;width:25px;height:22px;margin-left:auto;border-radius:3px;background:#404040;color:#fff}
.group button svg{width:14px;height:14px}
.item{display:flex;align-items:center;height:27px;margin:0 7px 0 4px;font-size:17px;color:#d5d5d5}
.item .tri{width:9px;height:11px;margin-right:2px}
.item .ico{width:20px;height:17px;margin-right:4px}
.item.cat{height:24px;font-size:15px;font-weight:700}
.fn{display:flex}
.fn svg{width:11px;height:10px}
.fn i{font:italic bold 19px/20px "Liberation Serif",serif;color:#8fa6dd}
.item .var{height:10px;border-radius:3px;width:18px;margin-right:6px;background:linear-gradient(#a4e83c,#6dbd1d 65%,#1c1c1c 75%)}
.lid{width:20px;height:20px;margin-left:auto;border-radius:3px;background:#6e6e6e}
.lid svg{width:20px;height:20px}

/* toolbar */
.center{padding-top:1px}
.toolbar{display:flex;flex:none;height:79px;padding:3px 0 2px;background:#3e3e3e linear-gradient(135deg,#a8881a 9px,transparent 10px) no-repeat}
.tools{display:flex;padding:0 11px 0 12px;border-right:2px solid #2c2c2c}
.tools:first-child{padding-left:1px}
.tools:last-child{border:0}
.tools button{display:flex;flex-direction:column;align-items:center;justify-content:space-between;width:64px;padding:1px 0 2px;text-shadow:1px 2px 1px #111}
.tools svg{width:46px;height:46px;filter:drop-shadow(2px 2px 1px #1a1a1a)}
.tools button.wide{width:96px}
.tools button.drop{justify-content:center;width:32px;color:#c8c8c8}
.tools .drop svg{width:10px;height:7px;filter:none}
.tools button.on{width:72px;margin:0 6px 0 9px;border-radius:3px;background:#d9820e}
.debug{display:flex;flex-direction:column;align-items:center;margin-left:4px;padding-top:18px}
.debug .combo{width:136px;height:28px}

.combo{position:relative;display:block;height:23px}
.combo select{appearance:none;width:100%;height:100%;padding:0 14px 0 6px;border:1px solid #efefef;outline:1px solid #2a2a2a;outline-offset:0;background:linear-gradient(#d8d8d8,#b2b2b2);color:#0c0c0c;text-overflow:clip}
.combo::after{content:"";position:absolute;right:9px;top:8px;width:10px;height:6px;background:#111;clip-path:polygon(0 0,100% 0,50% 100%);pointer-events:none}
.debug .combo select{background:#dedede;outline:0}
.debug .combo::after{top:11px}

/* graph */
.graph-tabs{padding:6px 0 0 5px}
.graph-tabs .tab{height:29px;background:#2d2d2d}
.graph-tabs .active{background:#3e3e3e;border-top:2px solid #b5a21d;border-radius:4px 4px 0 0}
.graph{position:relative;flex:1;min-height:0;border:2px solid #3e3e3e;overflow:hidden;background:
 linear-gradient(#090909,#090909) 474px 0/1px 100% no-repeat,
 linear-gradient(#090909,#090909) 0 937px/100% 1px no-repeat,
 linear-gradient(90deg,#161616 1px,transparent 1px) 474px 937px/160px 160px,
 linear-gradient(#161616 1px,transparent 1px) 474px 937px/160px 160px,
 linear-gradient(90deg,#353535 1px,transparent 1px) 474px 937px/20px 20px,
 linear-gradient(#353535 1px,transparent 1px) 474px 937px/20px 20px,#262626}
.crumbs{position:relative;z-index:2;display:flex;align-items:center;height:53px;padding-bottom:2px;background:#0b0b0bcc;font-size:24px;color:#9a9a9a}
.crumbs button{display:grid;place-items:center;width:52px;height:44px}
.crumbs button:first-child{width:42px;border-right:1px solid #666}
.crumbs button:nth-child(3){width:58px;border-right:1px solid #666}
.crumbs button svg{width:24px;height:28px}
.crumbs .gi{width:30px;height:24px;margin:0 16px 0 14px}
.chev{width:12px;height:20px;margin:0 10px 0 6px}
.zoom{margin-left:auto;padding-right:6px;font-size:28px;color:#3c3c3c}
.watermark{position:absolute;right:16px;bottom:16px;font-size:78px;line-height:88px;color:#5a5a5a}

/* pan of the graph view; everything in it is placed in graph coordinates */
.world{position:absolute;left:-522px;top:-175px}
.world>*{position:absolute}
.wires{left:0;top:0;fill:none;stroke-width:2;stroke-linecap:round}
.w-exec{stroke:#fff;stroke-width:3}
.w-float{stroke:#8fe33f}
.w-rot{stroke:#93a1e6}
.w-vec{stroke:#e8b526}
.w-enum{stroke:#0f7a6b}
.w-bool{stroke:#8c0a0a}

.comment{border:1px solid #777;background:#ffffff4d;box-shadow:0 2px 4px #000a,inset 0 0 6px #0006}
.comment h4{height:25px;padding-left:8px;background:#ababab;border-top:1px solid #c4c4c4;font-size:15px;line-height:25px;font-weight:700;color:#f0f0f0;text-shadow:1px 1px 1px #222}
.comment svg{position:absolute;right:1px;bottom:1px;width:9px;height:9px}
.bubble{height:35px;padding:0 10px;border:1px solid #fff;border-radius:4px;background:linear-gradient(#bdbdbddd,#dcdcdcf0);font-size:18px;line-height:34px;color:#4a4a4a}
.bubble::after{content:"";position:absolute;left:11px;top:100%;width:9px;height:8px;background:linear-gradient(#eee,#aaa8);clip-path:polygon(0 0,100% 0,50% 100%)}
.note{height:16px;padding:0 4px;border-radius:2px;font-size:8px;line-height:15px}
.note::after{left:4px;width:6px;height:4px}
.note::before{content:"";position:absolute;right:2px;top:2px;width:6px;height:11px;background:linear-gradient(#888 3px,#ddd 3px 6px,#cfe0ee 6px 9px,#789 9px)}

#c-pad{left:867px;top:373px;width:562px;height:358px}
#c-vr{left:1487px;top:373px;width:366px;height:149px}
#c-mouse{left:917px;top:743px;width:299px;height:250px}
#c-jump{left:917px;top:1013px;width:299px;height:170px}
#c-touch{left:917px;top:1203px;width:590px;height:240px}
#c-move{left:1357px;top:733px;width:789px;height:440px}
#b-pad{left:867px;top:328px;width:141px}
#b-vr{left:1487px;top:328px;width:359px}
#b-mouse{left:917px;top:698px;width:119px}
#b-jump{left:917px;top:968px;width:67px}
#b-touch{left:917px;top:1158px;width:115px}
#b-move{left:1357px;top:688px;width:150px}
#b-first{left:1197px;top:1182px;width:89px}
#b-zero{left:1557px;top:912px;width:179px}

/* graph nodes */
.node{padding-bottom:1px;border:1px solid #0c0c0c;border-radius:4px;background:linear-gradient(#232623d9,#151815e0);box-shadow:0 2px 4px #000b;font-size:8px;line-height:10px;color:#e4e4e4}
.node h5{display:flex;align-items:center;gap:3px;height:14px;margin-bottom:2px;padding:0 4px 0 6px;border-top:1px solid #ffffff30;border-radius:3px 3px 0 0;font-size:8px;font-weight:700}
.node h5 svg{width:9px;height:9px}
.node h5 .f{width:9px;font-size:12px;line-height:10px;color:#8fd4ff}
.node h5 b{width:6px;height:8px;margin:0 0 2px auto;border:1px solid #f33;border-radius:1px;background:#300}
.node small{display:block;font-size:8px;font-weight:400;color:#7d8f73}
.node em{font-style:italic}
.red h5{background:linear-gradient(95deg,#9c1b1f,#7a1619 50%,#4b2526 75%,#333)}
.blu h5{height:24px;background:linear-gradient(160deg,#4f87ad,#30627f 35%,#1f3b4c 60%,#2f4a5a 80%,#4d6676)}
.grn h5{background:linear-gradient(165deg,#62905f,#3d633b 40%,#1f331f 70%,#3b4a3b)}
.gry h5{background:linear-gradient(165deg,#8a8a8a,#5d5d5d 40%,#3a3a3a 60%,#666)}
.grn h5 .f{color:#a8e6a0}
.blu.flat h5{height:14px;background:linear-gradient(175deg,#4f87ad,#2b5a76 50%,#1f3b4c)}
.two h5{height:24px}
.blu h5 .f,.two h5 .f{align-self:flex-start;margin-top:2px}
.flat h5 .f{margin-top:0}
.node>div{display:flex;align-items:center;justify-content:space-between;height:18px;padding:0 6px}
.node>div>*{display:flex;align-items:center;gap:4px}
.tight>div{height:17px}
.pin{position:relative;width:8px;height:8px;margin-right:1px;border:2px solid;border-radius:50%}
.pin.on{background:currentColor}
.pin::after{content:"";position:absolute;left:5px;top:0;width:3px;height:4px;background:currentColor;clip-path:polygon(0 0,100% 50%,0 100%)}
.float{color:#90f03c}
.obj{color:#0b8fd8}
.key{color:#0b4bb5}
.enum{color:#0b7466}
.vec{color:#ffc226}
.rot{color:#9fb0f8}
.bool{color:#930606}
.ex{width:8px;height:10px;background:#fff;clip-path:path("M0 0H4L8 5 4 10H0z")}
.ex.off{clip-path:path(evenodd,"M0 0H4L8 5 4 10H0zM1 1V9H3.500L6.700 5 3.500 1z")}
.node u,.node input:not([type]){padding:0 3px;border:1px solid #aaa;text-decoration:none;line-height:10px}
.node input:not([type]){width:18px;height:12px}
.node input[type=checkbox]{appearance:none;width:9px;height:9px;border:1px solid #eee;border-radius:2px;background:#444}
.node .tall{height:36px;align-items:flex-start}
.node .stack{display:flex;flex-direction:column}
.node .combo{width:106px;height:13px;margin-left:3px}
.node .combo select{outline:0;padding:0 3px;border-color:#888;font-size:8px}
.node .combo::after{top:4px;right:3px;width:6px;height:4px}
.pill{display:flex;align-items:center;justify-content:flex-end;height:21px;padding:0 8px;border-radius:9px;background:radial-gradient(ellipse at 45% 0,#7fa65c,#4a5a3c 45%,#2b2d2acc 75%)}
.pill span{display:flex;align-items:center;gap:3px}
.math{display:flex;align-items:flex-start;justify-content:space-between;height:47px;padding:0 8px 0 4px;border-radius:6px;background:linear-gradient(#666c,#3b3b3bd9 25%,#474747d9)}
.node .pins{display:block;height:auto;padding:0;margin-top:4px}
.pins .pin{display:block;margin-bottom:7px}
.math>.pin{margin-top:9px}
.math p{display:grid;grid-template-columns:auto auto;gap:0 4px;align-self:flex-end;margin:0 -22px 6px 16px}
.math em{grid-column:1/3;padding-left:1px;font:700 12px/11px "Liberation Sans",sans-serif;color:#aaa}
.math b{line-height:11px}
#n-equal{height:40px}
#n-equal .pins .pin{margin-bottom:10px}
#n-equal>.pin{margin-top:15px}
#n-equal p{display:block;margin:0 auto 4px 9px}
#n-equal em{display:block;padding-left:66px;line-height:8px}
#n-equal .combo{margin:0}

#n-turnrate{left:897px;top:413px;width:98px}
#n-baseturn{left:937px;top:483px;width:87px}
#n-delta1{left:887px;top:523px;width:112px}
#n-mul1{left:1098px;top:463px;width:89px}
#n-yaw1{left:1247px;top:413px;width:111px}
#n-lookrate{left:897px;top:583px;width:109px}
#n-baselook{left:917px;top:653px;width:98px}
#n-delta2{left:887px;top:683px;width:112px}
#n-mul2{left:1098px;top:633px;width:89px}
#n-pitch1{left:1247px;top:583px;width:115px}
#n-resetvr{left:1517px;top:403px;width:102px}
#n-orient{left:1657px;top:403px;width:163px}
#n-turn{left:937px;top:793px;width:82px}
#n-yaw2{left:1077px;top:783px;width:111px}
#n-look{left:937px;top:893px;width:93px}
#n-pitch2{left:1077px;top:883px;width:115px}
#n-jump{left:937px;top:1053px;width:93px}
#n-dojump{left:1107px;top:1043px;width:91px}
#n-stopjump{left:1107px;top:1113px;width:91px}
#n-touch{left:947px;top:1233px;width:72px}
#n-equal{left:1037px;top:1303px;width:197px}
#n-branch1{left:1197px;top:1203px;width:111px}
#n-branch2{left:1207px;top:1363px;width:111px}
#n-tjump{left:1367px;top:1233px;width:91px}
#n-tstop{left:1367px;top:1353px;width:91px}
#n-ctrl{left:1387px;top:933px;width:139px}
#n-break{left:1557px;top:933px;width:121px}
#n-make{left:1677px;top:933px;width:154px}
#n-fwd{left:1847px;top:883px;width:127px}
#n-right{left:1847px;top:993px;width:127px}
#n-mfwd{left:1737px;top:793px;width:113px}
#n-mright{left:1737px;top:1063px;width:103px}
#n-add1{left:2007px;top:773px;width:112px}
#n-add2{left:2007px;top:1043px;width:112px}

/* details */
.details .panel{display:flex;flex-direction:column}
.details .bar{flex:none;height:28px;padding:0 0 0 3px;gap:11px;margin-bottom:2px}
.details .search{padding-left:6px}
.matrix{display:grid;place-items:center;width:33px;height:29px;border:1px solid #eee;background:#cdcdcd;box-shadow:0 0 0 1px #2228}
.matrix svg{width:16px;height:18px}
.details .view{margin-left:-5px;gap:8px}
.scroller{display:flex;flex:1;min-height:0;margin:0 1px 3px 3px;background:linear-gradient(90deg,transparent 652px,#393939 652px)}
.props{flex:1;overflow:hidden;font-size:13px}
.sec{padding-bottom:18px;background:linear-gradient(#232323,#232323) 227px 0/1px 100% no-repeat}
.ex-more{padding-bottom:3px}
.sec h3{display:flex;align-items:center;gap:5px;height:36px;padding:0 0 0 4px;border-right:1px solid #232323;border-radius:4px 4px 0 0;background:linear-gradient(#232323,#232323) 227px 0/1px 100% no-repeat #2f2f2f;font-size:17px;font-weight:500;text-shadow:1px 2px 1px #000}
.sec .tri{width:9px;height:9px}
.sec>label,.sec>div{display:grid;grid-template-columns:212px auto;align-items:center;justify-content:start;height:29px;padding-left:20px}
.sec>.num{height:28px}
.sec>.sel{height:31px}
.sec>.ai{display:flex;height:33px}
.ai label{width:212px}
.ai button{width:17px;margin-right:13px;color:#ddd}
.ai button svg{width:16px;height:16px}
.num span{display:flex;align-items:center;width:131px;height:20px;padding:0 7px 0 5px;border-radius:3px;background:#d9d9d9;color:#111}
.num input{flex:1}
.num svg{width:11px;height:11px}
.chk span{display:flex;align-items:center;gap:11px;padding-left:1px}
.chk input{appearance:none;width:18px;height:18px;border:1px solid #999;border-radius:3px;background:#a9a9a9}
.chk input:checked{background:#dcdcdc}
.chk input:checked::before{content:"";display:block;width:14px;height:14px;margin:1px;background:#666;clip-path:polygon(0 50%,22% 42%,38% 62%,78% 8%,100% 18%,42% 94%)}
.reset{width:10px;height:10px}
.sec .combo{width:129px;margin-left:1px}
.sec .ai .combo{width:91px;margin-right:12px}
.sec .long{width:236px}
.ai .combo select{padding:0 0 0 4px}
.ai .combo::after{right:6px}
.dim{opacity:.5}
.more{display:grid;place-items:center;width:100%;height:17px;background:#484848}
.more svg{width:13px;height:10px}
.scrollbar{width:18px;padding:3px 5px 0 1px}
.scrollbar i{display:block;width:13px;height:94%;background:#fff;outline:1px solid #222}

/* overlays */
.mark{position:absolute;border:3px solid #ed1c24;pointer-events:none}
.mark-no{position:absolute;font:20px/24px "Noto Sans",sans-serif;color:#ed1c24}
#m-graph{left:781px;top:269px;width:1440px;height:1252px}
#m-vars{left:7px;top:858px;width:187px;height:56px}
#m-cam{left:8px;top:225px;width:186px;height:61px}
#m1{left:728px;top:318px}
#m2{left:223px;top:872px}
#m3{left:231px;top:255px}
.meter{position:absolute;right:0;bottom:140px;width:12px;height:72px;padding:50px 0 0 3px;border:2px solid #d9a52c;border-right:0;border-radius:5px 0 0 5px;background:#2e3a55}
.meter i{display:block;height:15px;background:repeating-linear-gradient(#3fd08a 0 2px,transparent 2px 4px)}
.toast{position:absolute;right:15px;bottom:15px;display:flex;align-items:center;gap:18px;width:262px;height:80px;padding-left:27px;border:2px solid #000;background:linear-gradient(#262626,#161616 50%,#1e1e1e)}
.toast svg{width:38px;height:38px}
.toast strong{display:block;font-size:26px;line-height:34px;font-weight:400;color:#eee}
.toast p{display:flex;gap:8px;margin-top:6px}
.toast button{height:26px;padding:0 5px;border:1px solid #eee;background:linear-gradient(#d8d8d8,#b2b2b2);color:#111}
.credit{position:absolute;right:17px;bottom:6px;font-size:14px;color:#c4c4c4;text-shadow:1px 1px 1px #000}
```
